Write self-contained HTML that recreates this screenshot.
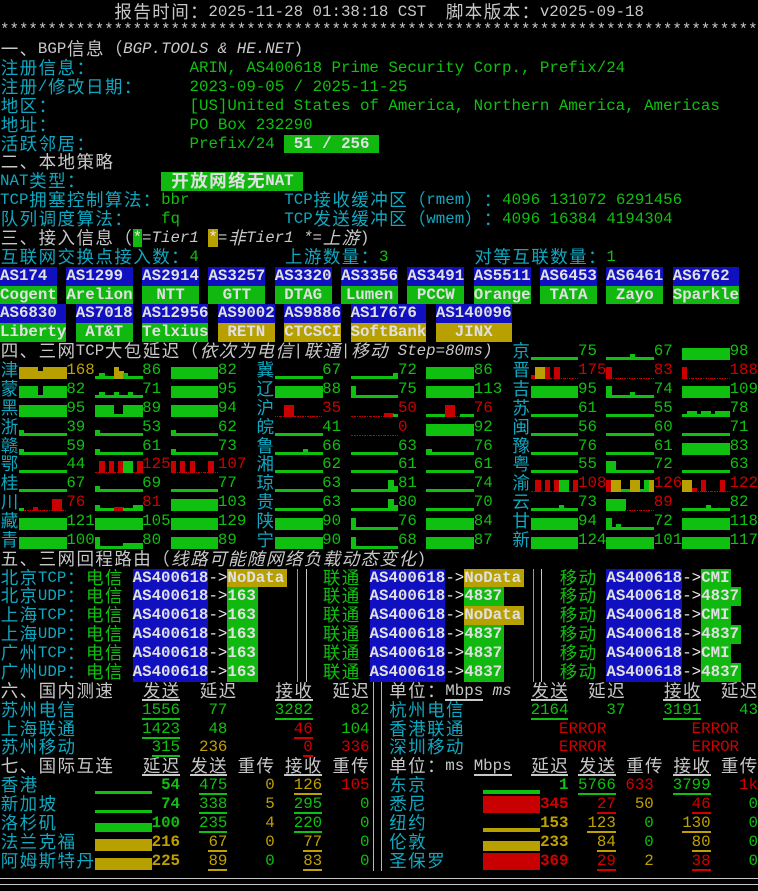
<!DOCTYPE html>
<html><head><meta charset="utf-8">
<style>
html,body{margin:0;padding:0;background:#000;width:758px;height:891px;overflow:hidden;position:relative}
.t{position:absolute;white-space:pre;font-family:"Liberation Mono","Noto Sans CJK SC",monospace;font-size:15.79px;line-height:18.87px;height:18.87px;color:#c8c8c8}
.w{display:inline-block;width:18.95px;text-align:center;font-size:17.5px;line-height:15px;vertical-align:baseline;position:relative;top:2px}
.g{color:#10c010}.c{color:#10a8c0}.y{color:#c0a000}.r{color:#d00000}.wh{color:#e8e8e8}
.i{font-style:italic}.b{font-weight:bold}
.bx{display:inline-block;height:18.87px;color:#e0e0e0;font-weight:bold}
.bG{background:#10b810}.bY{background:#b8a000}.bB{background:#1010c0}
.u{display:inline-block;height:19px;border-bottom:2px solid currentColor;box-sizing:border-box}
.bar{position:absolute}
</style></head><body>
<script>
const W=9.475,H=18.87,T0=2.5;
const CJK=/[\u2E80-\u9FFF\uFF00-\uFFEF\u3000-\u303F]/;
function wrap(el){
  const tw=document.createTreeWalker(el,NodeFilter.SHOW_TEXT);const ns=[];
  while(tw.nextNode())ns.push(tw.currentNode);
  ns.forEach(n=>{const s=n.nodeValue;if(!CJK.test(s))return;const f=document.createDocumentFragment();let buf='';
    for(const ch of s){if(CJK.test(ch)){if(buf){f.appendChild(document.createTextNode(buf));buf='';}const sp=document.createElement('span');sp.className='w';sp.textContent=ch;f.appendChild(sp);}else buf+=ch;}
    if(buf)f.appendChild(document.createTextNode(buf));n.parentNode.replaceChild(f,n);});
}
function put(row,col,html,cls){const d=document.createElement('div');d.className='t '+(cls||'');d.style.left=(col*W)+'px';d.style.top=(T0+row*H)+'px';d.innerHTML=html;document.body.appendChild(d);wrap(d);return d;}
function rect(x,y,w,h,c,extra){const d=document.createElement('div');d.className='bar';d.style.cssText=`left:${x}px;top:${y}px;width:${w}px;height:${h}px;background:${c};`+(extra||'');document.body.appendChild(d);}
function box(row,col,w,txt,bg,align){put(row,col,`<span class="bx ${bg}" style="width:${w*W}px;text-align:${align||'left'}">${txt}</span>`);}
function rnum(row,end,txt,cls,ul){const s=ul?`<span class="u">${txt}</span>`:txt;put(row,end-txt.length,s,cls);}
const COL={G:'#10c010',Y:'#b8a000',R:'#c80000'};
function spark(row,col,code){
  if(code.length==1)code=code.repeat(10);
  const bot=T0+row*H+18;const hw=W/2;
  for(let k=0;k<10;k++){const ch=code[k];const x=col*W+k*hw;
    let c=null,h=0;
    switch(ch){case'F':c=COL.G;h=12;break;case'l':c=COL.G;h=3;break;case'm':c=COL.G;h=6;break;
      case'Y':c=COL.Y;h=12;break;case'y':c=COL.Y;h=8;break;case'R':c=COL.R;h=12;break;case'r':c=COL.R;h=4;break;
      case'x':rect(x,bot-2,hw,1,'transparent','border-bottom:1px dotted #c80000');continue;}
    if(c)rect(x,bot-h,hw+0.5,h,c);
  }
}
put(0,12,'报告时间：2025-11-28 01:38:18 CST  脚本版本：v2025-09-18');
put(1,0,'*'.repeat(80));
put(2,0,'一、BGP信息（<span class="i">BGP.TOOLS &amp; HE.NET</span>)');
[['注册信息：','ARIN, AS400618 Prime Security Corp., Prefix/24'],['注册/修改日期：','2023-09-05 / 2025-11-25'],['地区：','[US]United States of America, Northern America, Americas'],['地址：','PO Box 232290'],['活跃邻居：','Prefix/24']].forEach((a,i)=>{put(3+i,0,a[0],'c');put(3+i,20,a[1],'g');});
box(7,30,10,' 51 / 256','bG');
put(8,0,'二、本地策略');
put(9,0,'NAT类型：','c');box(9,17,15,' 开放网络无NAT','bG');
put(10,0,'TCP拥塞控制算法：','c');put(10,17,'bbr','g');put(10,30,'TCP接收缓冲区（rmem）：','c');put(10,53,'4096 131072 6291456','g');
put(11,0,'队列调度算法：','c');put(11,17,'fq','g');put(11,30,'TCP发送缓冲区（wmem）：','c');put(11,53,'4096 16384 4194304','g');
put(12,0,'三、接入信息（<span class="bG wh">*</span><span class="i">=Tier1 </span><span class="bY wh">*</span><span class="i">=非Tier1 *=上游</span>)');
put(13,0,'互联网交换点接入数：<span class="g">4</span>','c');put(13,30,'上游数量：<span class="g">3</span>','c');put(13,50,'对等互联数量：<span class="g">1</span>','c');
[[0,6,'AS174','Cogent','G'],[7,7,'AS1299','Arelion','G'],[15,6,'AS2914','NTT','G'],[22,6,'AS3257','GTT','G'],[29,6,'AS3320','DTAG','G'],[36,6,'AS3356','Lumen','G'],[43,6,'AS3491','PCCW','G'],[50,6,'AS5511','Orange','G'],[57,6,'AS6453','TATA','G'],[64,6,'AS6461','Zayo','G'],[71,7,'AS6762','Sparkle','G']].forEach(a=>{box(14,a[0],a[1],a[2],'bB');box(15,a[0],a[1],a[3],'b'+a[4],'center');});
[[0,7,'AS6830','Liberty','G'],[8,6,'AS7018','AT&amp;T','G'],[15,7,'AS12956','Telxius','G'],[23,6,'AS9002','RETN','Y'],[30,6,'AS9886','CTCSCI','Y'],[37,8,'AS17676','SoftBank','Y'],[46,8,'AS140096','JINX','Y']].forEach(a=>{box(16,a[0],a[1],a[2],'bB');box(17,a[0],a[1],a[3],'b'+a[4],'center');});
put(18,0,'四、三网TCP大包延迟（<span class="i">依次为电信|联通|移动 Step=80ms)</span>');
const clsOf={G:'g',R:'r',Y:'y'};
function prov(row,col,name,groups){put(row,col,name,'c');groups.forEach((g,k)=>{const c0=col+2+k*8;spark(row,c0,g[0]);put(row,c0+5,g[1],clsOf[g[2]]);});}
const L=[
['津',[['YYYYyYYYYY','168','Y'],['lmllYymlll','86','G'],['F','82','G']]],
['蒙',[['FFFFlFFFFF','82','G'],['lmllmllmll','71','G'],['F','95','G']]],
['黑',[['F','95','G'],['FFFFllFFFF','89','G'],['F','94','G']]],
['浙',[['mlllllllll','39','G'],['mlllllllll','53','G'],['mlllllllll','62','G']]],
['赣',[['mlllllllll','59','G'],['mlllllllll','61','G'],['mlllllllll','73','G']]],
['鄂',[['l','44','G'],['xRxRxRFFxR','125','R'],['RxRxRxxxRx','107','R']]],
['桂',[['l','67','G'],['mlllllllll','69','G'],['l','77','G']]],
['川',[['lxxrxxxRRx','76','R'],['mlllrrllmm','81','R'],['F','103','G']]],
['藏',[['F','121','G'],['F','105','G'],['F','129','G']]],
['青',[['F','100','G'],['Flllllmmmm','80','G'],['F','89','G']]]];
const M=[
['冀',[['l','67','G'],['lllllllllm','72','G'],['F','86','G']]],
['辽',[['F','88','G'],['Flllllllll','75','G'],['F','113','G']]],
['沪',[['xxRRxxxxxx','35','R'],['xxxxxxxrrl','50','R'],['llllRRxlll','76','R']]],
['皖',[['l','41','G'],['xxxxxxxxxx','0','R'],['F','92','G']]],
['鲁',[['llllllmlll','66','G'],['l','63','G'],['mlllllllll','76','G']]],
['湘',[['l','62','G'],['l','61','G'],['l','61','G']]],
['琼',[['l','63','G'],['llllllllFm','81','G'],['l','74','G']]],
['贵',[['l','63','G'],['llllllllFm','80','G'],['l','70','G']]],
['陕',[['F','90','G'],['Flllllllll','76','G'],['F','84','G']]],
['宁',[['F','90','G'],['Flllllllll','68','G'],['F','87','G']]]];
const Rr=[
['京',[['l','75','G'],['lllllmllll','67','G'],['F','98','G']]],
['晋',[['rYYRxRxxxx','175','R'],['Rxxxxxxxxx','83','R'],['Rxxxxxxxxx','188','R']]],
['吉',[['F','95','G'],['Fllllmllll','74','G'],['F','109','G']]],
['苏',[['l','61','G'],['l','55','G'],['lmmlmmlmmm','78','G']]],
['闽',[['l','56','G'],['l','60','G'],['l','71','G']]],
['豫',[['l','76','G'],['l','61','G'],['F','83','G']]],
['粤',[['l','55','G'],['FFllllllll','72','G'],['l','63','G']]],
['渝',[['xRxRxRFFxR','108','R'],['RYYllYYlFY','126','R'],['YYrxRxxxRx','122','R']]],
['云',[['llllllmlll','73','G'],['FFFFxxxxxx','89','R'],['lllllmllll','82','G']]],
['甘',[['F','94','G'],['Flmlllllll','72','G'],['F','118','G']]],
['新',[['F','124','G'],['F','101','G'],['F','117','G']]]];
L.forEach((p,i)=>prov(19+i,0,p[0],p[1]));
M.forEach((p,i)=>prov(19+i,27,p[0],p[1]));
Rr.forEach((p,i)=>prov(18+i,54,p[0],p[1]));
put(29,0,'五、三网回程路由（<span class="i">线路可能随网络负载动态变化</span>)');
const RT=[['北京TCP：','NoData','NoData','CMI'],['北京UDP：','163','4837','4837'],['上海TCP：','163','NoData','CMI'],['上海UDP：','163','4837','4837'],['广州TCP：','163','4837','CMI'],['广州UDP：','163','4837','4837']];
RT.forEach((a,i)=>{const r=30+i;put(r,0,a[0],'c');
  [[9,'电信',14,a[1]],[34,'联通',39,a[2]],[59,'移动',64,a[3]]].forEach(s=>{put(r,s[0],s[1],'g');box(r,s[2],8,'AS400618','bB');put(r,s[2]+8,'->','wh');box(r,s[2]+10,s[3].length+(s[3]=='NoData'?0.3:0.2),s[3],s[3]=='NoData'?'bY':'bG');});});
const rt0=T0+30*H,rt1=T0+36*H;
rect(297,rt0,1,rt1-rt0,'#c09060');rect(306,rt0,1,rt1-rt0,'#c8c8c8');rect(533,rt0,1,rt1-rt0,'#c09060');rect(541,rt0,1,rt1-rt0,'#c8c8c8');
put(36,0,'六、国内测速');
put(36,15,'<span class="u">发送</span>');put(36,21,'延迟');put(36,29,'<span class="u">接收</span>');put(36,35,'延迟');
put(36,41,'单位：<span class="u">Mbps</span> <span class="i">ms</span>');
put(36,56,'<span class="u">发送</span>');put(36,62,'延迟');put(36,70,'<span class="u">接收</span>');put(36,76,'延迟');
put(37,0,'苏州电信','c');rnum(37,19,'1556','g',1);rnum(37,24,'77','g');rnum(37,33,'3282','g',1);rnum(37,39,'82','g');
put(38,0,'上海联通','c');rnum(38,19,'1423','g',1);rnum(38,24,'48','g');rnum(38,33,'46','r',1);rnum(38,39,'104','g');
put(39,0,'苏州移动','c');rnum(39,19,'315','g',1);rnum(39,24,'236','y');rnum(39,33,'0','r',1);rnum(39,39,'336','r');
put(37,41,'杭州电信','c');rnum(37,60,'2164','g',1);rnum(37,66,'37','g');rnum(37,74,'3191','g',1);rnum(37,80,'43','g');
put(38,41,'香港联通','c');put(38,59,'ERROR','r');put(38,73,'ERROR','r');
put(39,41,'深圳移动','c');put(39,59,'ERROR','r');put(39,73,'ERROR','r');
put(40,0,'七、国际互连');
put(40,15,'<span class="u">延迟</span>');put(40,20,'<span class="u">发送</span>');put(40,25,'重传');put(40,30,'<span class="u">接收</span>');put(40,35,'重传');
put(40,41,'单位：ms <span class="u">Mbps</span>');
put(40,56,'<span class="u">延迟</span>');put(40,61,'<span class="u">发送</span>');put(40,66,'重传');put(40,71,'<span class="u">接收</span>');put(40,76,'重传');
const IL=[['香港',3,'G','54','g','475','g','0','y','126','y','105','r'],['新加坡',3,'G','74','g','338','g','5','y','295','g','0','g'],['洛杉矶',9,'G','100','g','235','g','4','y','220','g','0','g'],['法兰克福',12,'Y','216','y','67','y','0','y','77','y','0','g'],['阿姆斯特丹',12,'Y','225','y','89','y','0','g','83','y','0','g']];
IL.forEach((a,i)=>{const r=41+i;put(r,0,a[0],'c');const bot=T0+r*H+18;rect(10*W,bot-a[1],6*W,a[1],COL[a[2]]);
  rnum(r,19,a[3],a[4]+' b');rnum(r,24,a[5],a[6],1);rnum(r,29,a[7],a[8]);rnum(r,34,a[9],a[10],1);rnum(r,39,a[11],a[12]);});
const IR=[['东京',4,'G','1','g','5766','g','633','r','3799','g','1k','r'],['悉尼',17,'R','345','r','27','r','50','y','46','r','0','g'],['纽约',4,'Y','153','y','123','y','0','g','130','y','0','g'],['伦敦',10,'Y','233','y','84','y','0','g','80','y','0','g'],['圣保罗',17,'R','369','r','29','r','2','y','38','r','0','g']];
IR.forEach((a,i)=>{const r=41+i;put(r,41,a[0],'c');const bot=T0+r*H+18;rect(51*W,bot-a[1],6*W,a[1],COL[a[2]]);
  rnum(r,60,a[3],a[4]+' b');rnum(r,65,a[5],a[6],1);rnum(r,69,a[7],a[8]);rnum(r,75,a[9],a[10],1);rnum(r,80,a[11],a[12]);});
const v0=T0+36*H,v1=T0+46*H;
rect(373,v0,1,v1-v0,'#b8b8b8');rect(381,v0,1,v1-v0,'#b8b8b8');
rect(0,878,758,1,'#c8c8c8','');rect(0,884,758,1,'#c8c8c8','');
</script>
</body></html>
